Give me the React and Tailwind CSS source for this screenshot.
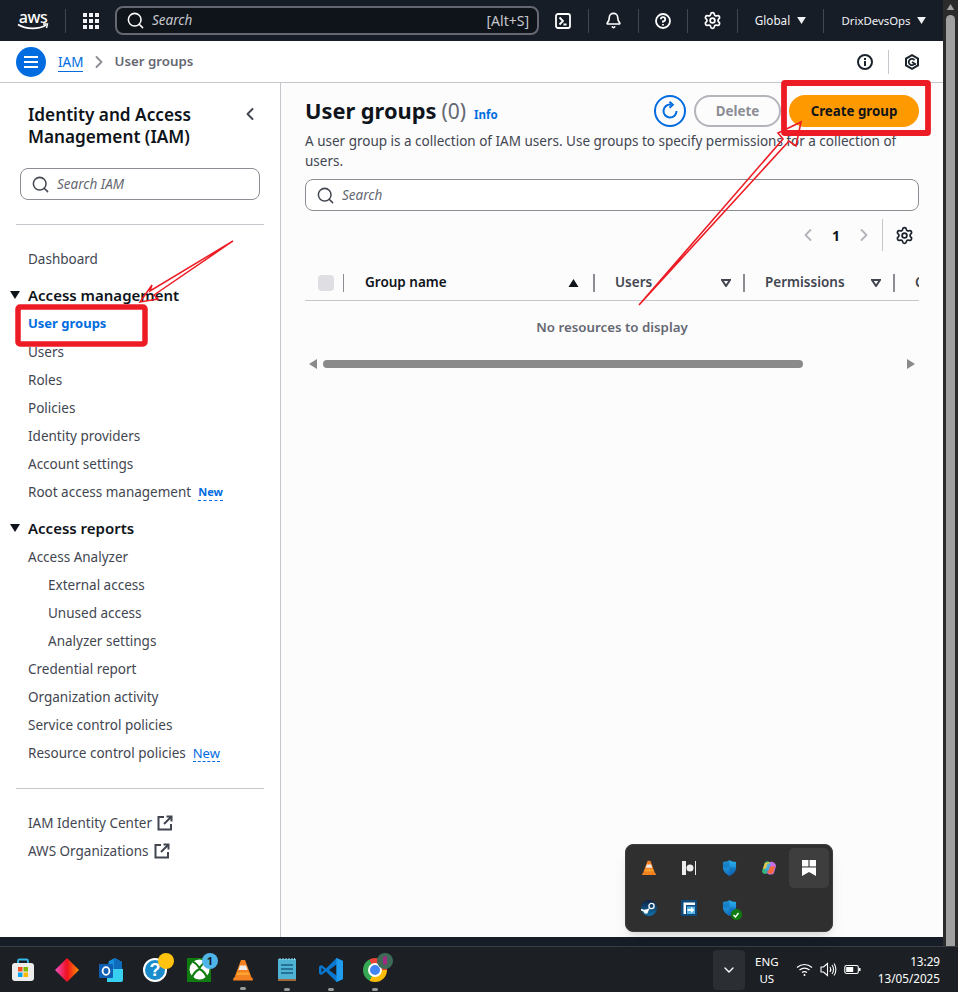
import React from "react";
import { Search, ChevronLeft, ChevronRight, ChevronDown, Bell, Settings } from "lucide-react";

const font = { fontFamily: '"Noto Sans", "Open Sans", sans-serif' };

function Caret({ className = "" }) {
  return (
    <svg viewBox="0 0 10 8" className={className} fill="currentColor"><path d="M0 0h10L5 8z" /></svg>
  );
}

function Gear({ className = "" }) {
  return <Settings className={className} strokeWidth={2.2} />;
}

function ExtLink() {
  return (
    <svg viewBox="0 0 16 16" className="w-[16px] h-[16px] ml-[5px] shrink-0" fill="none" stroke="#424650" strokeWidth="2">
      <path d="M7 2H1.500v12.500H14V9" />
      <path d="M9.500 1.500h5v5M14.500 1.500 7 9" />
    </svg>
  );
}

function HeaderDivider() {
  return <div className="w-px h-[24px] bg-[#424650]" />;
}

function TopBar() {
  return (
    <div className="h-[41px] bg-[#161d26] flex items-center text-white shrink-0">
      <div className="w-[65px] pl-[17px] flex flex-col items-start">
        <div className="w-[32px] flex flex-col items-center">
          <span className="text-[16px] leading-[12px] tracking-[-0.4px] font-medium">aws</span>
          <svg viewBox="0 0 32 7" className="w-[32px] h-[7px]" fill="none"><path d="M1 1.500C9 6.500 22 6.500 29 2" stroke="#fff" strokeWidth="1.700" /><path d="M26 1h4.500l-1 4" stroke="#fff" strokeWidth="1.400" /></svg>
        </div>
      </div>
      <div className="w-px h-[24px] bg-[#424650]" />
      <div className="w-[49px] flex justify-center pl-px">
        <div className="grid grid-cols-3 gap-[2px]">
          {Array.from({ length: 9 }).map((_, i) => (
            <div key={i} className="w-[4px] h-[4px] bg-[#f3f3f7]" />
          ))}
        </div>
      </div>
      <div className="w-[424px] h-[29px] bg-[#0f141a] border-2 border-[#656871] rounded-[8px] flex items-center pl-[9px] pr-[8px] text-[#c6c6cd]">
        <Search className="w-[19px] h-[19px] text-white mr-[7px]" strokeWidth={1.900} />
        <span className="italic text-[13.500px] flex-1">Search</span>
        <span className="text-[14px]">[Alt+S]</span>
      </div>
      <div className="w-[48px] flex justify-center">
        <svg viewBox="0 0 16 16" className="w-[16px] h-[16px]" fill="none" stroke="#fff" strokeWidth="1.800"><rect x="1" y="1" width="14" height="14" rx="2" /><path d="M4.500 4.500 8 8l-3.500 3.500M8.500 11.500h3" /></svg>
      </div>
      <div className="w-[1px] ml-px h-[24px] bg-[#424650]" />
      <div className="w-[49px] flex justify-center pr-px"><Bell className="w-[17px] h-[17px]" strokeWidth={2.300} /></div>
      <HeaderDivider />
      <div className="w-[48px] flex justify-center">
        <svg viewBox="0 0 16 16" className="w-[16px] h-[16px]" fill="none" stroke="#fff" strokeWidth="1.800"><circle cx="8" cy="8" r="7" /><path d="M5.800 6.200A2.200 2.200 0 1 1 8 8.500v1.200M8 11v1.600" /></svg>
      </div>
      <HeaderDivider />
      <div className="w-[49px] flex justify-center"><Gear className="w-[19px] h-[19px]" /></div>
      <HeaderDivider />
      <div className="w-[85px] flex justify-center items-center gap-[7px] text-[11.700px] text-[#f3f3f7]">
        <span>Global</span><Caret className="w-[9px] h-[7px]" />
      </div>
      <HeaderDivider />
      <div className="flex-1 flex justify-center items-center gap-[6px] text-[11.400px] text-[#f3f3f7]">
        <span>DrixDevsOps</span><Caret className="w-[9px] h-[7px]" />
      </div>
    </div>
  );
}

function BreadcrumbBar() {
  return (
    <div className="h-[42px] bg-white border-b border-[#c6c6cd] flex items-center shrink-0">
      <div className="ml-[16px] w-[30px] h-[30px] rounded-full bg-[#006ce0] flex flex-col items-center justify-center gap-[3px]">
        <div className="w-[14px] h-[2px] bg-white" />
        <div className="w-[14px] h-[2px] bg-white" />
        <div className="w-[14px] h-[2px] bg-white" />
      </div>
      <span className="ml-[12px] text-[13.500px] text-[#5f6b7a] leading-[20px] pt-px"><span className="text-[#006ce0] border-b border-[#006ce0]">IAM</span></span>
      <ChevronRight className="w-[20px] h-[20px] text-[#8c8c94] ml-[6px]" strokeWidth={2.200} />
      <span className="ml-[5px] text-[13.300px] font-semibold text-[#656871] pt-px">User groups</span>
      <div className="flex-1" />
      <svg viewBox="0 0 16 16" className="w-[16px] h-[16px]" fill="none" stroke="#1b232d" strokeWidth="2"><circle cx="8" cy="8" r="7" /><path d="M8 7v5M8 4v2" /></svg>
      <div className="w-px h-[24px] bg-[#c6c6cd] ml-[15px]" />
      <div className="w-[54px] flex justify-center pr-[8px]">
        <svg viewBox="0 0 16 16" className="w-[16px] h-[16px]" fill="none" stroke="#1b232d" strokeWidth="2"><path d="M8 1.200 14 4.600v6.800L8 14.800 2 11.400V4.600z" /><path d="M10.600 6.200A3.200 3.200 0 1 0 11 9M8 8l4 2.500" strokeWidth="1.700" /></svg>
      </div>
    </div>
  );
}

function NavItem({ children, indent = false, active = false, badge = null }) {
  return (
    <div className={`h-[28px] flex items-center ${indent ? "pl-[48px]" : "pl-[28px]"} ${active ? "text-[13px] text-[#006ce0] font-bold" : "text-[13.500px] text-[#424650]"}`}>
      <span>{children}</span>
      {badge}
    </div>
  );
}

function NewBadge({ small }) {
  return (
    <span className={`text-[#006ce0] border-b border-dashed border-[#006ce0] leading-[16px] ml-[7px] ${small ? "text-[11px] font-bold" : "text-[13px]"}`}>New</span>
  );
}

function SectionHead({ children }) {
  return (
    <div className="h-[29px] pb-px flex items-center pl-[10px] text-[15px] font-semibold text-[#0f141a]">
      <Caret className="w-[10px] h-[8px] mr-[8px]" />
      <span>{children}</span>
    </div>
  );
}

function Sidebar() {
  return (
    <div className="w-[281px] shrink-0 bg-white border-r border-[#c6c6cd] flex flex-col">
      <div className="flex items-start pl-[28px] pt-[21px] pr-[20px]">
        <div className="flex-1 text-[17.200px] leading-[22px] font-semibold text-[#0f141a]">Identity and Access<br />Management (IAM)</div>
        <ChevronLeft className="w-[20px] h-[20px] text-[#424650]" strokeWidth={2.300} />
      </div>
      <div className="mx-[20px] mt-[20px] h-[32px] border border-[#8c8c94] rounded-[8px] flex items-center pl-[10px]">
        <Search className="w-[19px] h-[19px] text-[#424650] mr-[7px]" strokeWidth={1.900} />
        <span className="italic text-[13.500px] text-[#656871]">Search IAM</span>
      </div>
      <div className="mx-[16px] mt-[24px] border-t border-[#c6c6cd]" />
      <div className="mt-[20px]"><NavItem>Dashboard</NavItem></div>
      <div className="mt-[8px]"><SectionHead>Access management</SectionHead></div>
      <NavItem active>User groups</NavItem>
      <NavItem>Users</NavItem>
      <NavItem>Roles</NavItem>
      <NavItem>Policies</NavItem>
      <NavItem>Identity providers</NavItem>
      <NavItem>Account settings</NavItem>
      <NavItem badge={<NewBadge small />}>Root access management</NavItem>
      <div className="mt-[8px]"><SectionHead>Access reports</SectionHead></div>
      <NavItem>Access Analyzer</NavItem>
      <NavItem indent>External access</NavItem>
      <NavItem indent>Unused access</NavItem>
      <NavItem indent>Analyzer settings</NavItem>
      <NavItem>Credential report</NavItem>
      <NavItem>Organization activity</NavItem>
      <NavItem>Service control policies</NavItem>
      <NavItem badge={<NewBadge />}>Resource control policies</NavItem>
      <div className="mx-[16px] mt-[21px] border-t border-[#c6c6cd]" />
      <div className="mt-[20px]">
        <NavItem badge={<ExtLink />}>IAM Identity Center</NavItem>
        <NavItem badge={<ExtLink />}>AWS Organizations</NavItem>
      </div>
    </div>
  );
}

function ColHead({ label, sort }) {
  return (
    <div className="ml-[20px] w-[130px] h-[18px] flex items-center justify-between border-r-2 border-[#8c8c94] pr-[12px] shrink-0">
      <span className="text-[13.500px] font-semibold text-[#424650]">{label}</span>
      {sort}
    </div>
  );
}

function SortDown() {
  return <svg viewBox="0 0 10 8" className="w-[10px] h-[8px]" fill="none" stroke="#424650" strokeWidth="2"><path d="M1 1h8L5 7z" /></svg>;
}

function MainPanel() {
  return (
    <div className="flex-1 min-w-0 bg-[#fcfcfd] px-[24px] pt-[12px] flex flex-col overflow-hidden">
      <div className="flex items-start">
        <div className="flex items-baseline flex-1 pt-[1px]">
          <span className="text-[21.800px] leading-[30px] font-bold text-[#0f141a]">User groups</span>
          <span className="text-[21px] leading-[30px] text-[#656871] ml-[5px]">(0)</span>
          <span className="text-[11.500px] font-bold text-[#006ce0] ml-[8px]">Info</span>
        </div>
        <div className="w-[32px] h-[32px] rounded-full border-2 border-[#006ce0] flex items-center justify-center">
          <svg viewBox="0 0 20 20" className="w-[20px] h-[20px]" fill="none" stroke="#006ce0" strokeWidth="2"><path d="M16.500 10A6.500 6.500 0 1 1 11 3.600" /><path d="M9.500 0.800 12.800 3.800 9.500 6.800" /></svg>
        </div>
        <div className="ml-[8px] w-[87px] h-[32px] rounded-full border-2 border-[#b4b4bb] flex items-center justify-center text-[13.400px] font-bold text-[#8c8c94]">Delete</div>
        <div className="ml-[8px] w-[130px] h-[32px] pt-px rounded-full bg-[#ff9900] flex items-center justify-center text-[13.300px] font-bold text-[#0f141a]">Create group</div>
      </div>
      <p className="text-[13.500px] leading-[20px] text-[#424650] mt-[4px] pr-[14px]">A user group is a collection of IAM users. Use groups to specify permissions for a collection of users.</p>
      <div className="mt-[8px] h-[32px] shrink-0 bg-white border border-[#8c8c94] rounded-[8px] flex items-center pl-[10px]">
        <Search className="w-[19px] h-[19px] text-[#424650] mr-[7px]" strokeWidth={1.900} />
        <span className="italic text-[13.500px] text-[#656871]">Search</span>
      </div>
      <div className="h-[32px] mt-[8px] shrink-0 flex items-center justify-end">
        <ChevronLeft className="w-[20px] h-[20px] text-[#b4b4bb]" strokeWidth={2.200} />
        <span className="ml-[14px] text-[14px] font-bold text-[#0f141a] w-[10px]">1</span>
        <ChevronRight className="ml-[12px] w-[20px] h-[20px] text-[#b4b4bb]" strokeWidth={2.200} />
        <div className="ml-[8px] w-px h-[32px] bg-[#c6c6cd]" />
        <div className="w-[36px] flex justify-center pl-[7px]"><Gear className="w-[19px] h-[19px] text-[#1b232d]" /></div>
      </div>
      <div className="h-[44px] shrink-0 mt-[6px] pt-[8px] border-b border-[#c6c6cd] flex items-center overflow-hidden pl-[13px]">
        <div className="w-[16px] h-[16px] rounded-[4px] bg-[#dedee3] shrink-0" />
        <div className="w-px h-[18px] bg-[#8c8c94] ml-[9px] shrink-0" />
        <div className="ml-[21px] w-[230px] shrink-0 h-[18px] flex items-center justify-between border-r-2 border-[#8c8c94] pr-[14px]">
          <span className="text-[13.500px] font-semibold text-[#0f141a]">Group name</span>
          <Caret className="w-[11px] h-[8px] rotate-180 text-[#0f141a]" />
        </div>
        <ColHead label="Users" sort={<SortDown />} />
        <ColHead label="Permissions" sort={<SortDown />} />
        <span className="ml-[20px] text-[13.500px] font-semibold text-[#424650] shrink-0 whitespace-nowrap">C</span>
      </div>
      <div className="h-[53px] shrink-0 flex items-center justify-center text-[13.300px] font-semibold text-[#656871] pt-px">No resources to display</div>
      <div className="h-[12px] shrink-0 flex items-center mt-[4px] pl-[3px] pr-[3px]">
        <Caret className="w-[10px] h-[8px] rotate-90 text-[#8a8a8a] shrink-0" />
        <div className="h-[8px] w-[480px] rounded-full bg-[#8a8a8a] ml-[5px]" />
        <div className="flex-1" />
        <Caret className="w-[10px] h-[8px] -rotate-90 text-[#8a8a8a] shrink-0" />
      </div>
    </div>
  );
}

function Annotations() {
  return (
    <svg className="absolute left-0 top-0 pointer-events-none" width="958" height="992" viewBox="0 0 958 992" fill="none">
      <rect x="18" y="307" width="127" height="37" rx="2" stroke="#ed1c24" strokeWidth="5.500" />
      <rect x="784" y="83" width="144" height="50" rx="1" stroke="#ed1c24" strokeWidth="5.800" />
      <path d="M233 241 L150 291 L152 285 L140 302 L158 299 L154 295 Z" stroke="#ed1c24" strokeWidth="1.500" />
      <path d="M639 305 L783 139 L778 133 L801 122 L796 146 L789 141 Z" stroke="#ed1c24" strokeWidth="1.600" />
    </svg>
  );
}

function TrayIcon({ children, active }) {
  return <div className={`w-[40px] h-[40px] rounded-[5px] flex items-center justify-center ${active ? "bg-[#3e3e3e]" : ""}`}>{children}</div>;
}

function Cone({ size = 16 }) {
  return (
    <svg viewBox="0 0 20 22" width={size} height={size * 1.1}>
      <path d="M8 1h4l6 16H2z" fill="#f58220" />
      <path d="M7 6.500h6l1.600 4.500H5.400z" fill="#ececec" />
      <path d="M4.500 13.500h11l1 2.500H3.500z" fill="#ffa733" />
      <path d="M2.500 17c-1 1-2 2-2.500 3.500 0 1 .5 1 1 1h18c.5 0 1 0 1-1C19.500 19 18.500 18 17.500 17z" fill="#f58220" />
    </svg>
  );
}

function Shield({ check }) {
  return (
    <div className="relative w-[15px] h-[16px]">
      <svg viewBox="0 0 16 17" width="15" height="16"><defs><linearGradient id={check ? "sh2" : "sh1"} x1="0" x2="0" y1="0" y2="1"><stop offset="0" stopColor="#2bb3f0" /><stop offset="1" stopColor="#0f6cbd" /></linearGradient></defs><path d="M8 0c2 1.500 4 2 7 2.200V8c0 4-3 7-7 9-4-2-7-5-7-9V2.200C4 2 6 1.500 8 0z" fill={check ? "url(#sh2)" : "url(#sh1)"} /><path d="M8 8h7c0 4-3 7-7 9z M8 8H1V2.200C4 2 6 1.500 8 0z" fill="#0a4f9c" opacity=".35" /></svg>
      {check && <div className="absolute -right-[5px] -bottom-[4px] w-[11px] h-[11px] rounded-full bg-[#107c10] flex items-center justify-center"><svg viewBox="0 0 8 8" width="8" height="8" fill="none" stroke="#fff" strokeWidth="1.400"><path d="M1.500 4 3.500 6 6.500 2" /></svg></div>}
    </div>
  );
}

function TrayPopup() {
  return (
    <div className="absolute left-[625px] top-[844px] w-[208px] h-[88px] rounded-[8px] bg-[#2f2f2f] border border-[#3d3d3d] shadow-lg p-[3px] grid grid-cols-5 grid-rows-2">
      <TrayIcon><Cone size={14} /></TrayIcon>
      <TrayIcon><svg viewBox="0 0 16 16" width="16" height="16"><rect x="1" y="1" width="4" height="14" fill="#eee" /><circle cx="9" cy="8" r="3.500" fill="#eee" /><rect x="14" y="1" width="1" height="14" fill="#eee" /></svg></TrayIcon>
      <TrayIcon><Shield /></TrayIcon>
      <TrayIcon><svg viewBox="0 0 16 16" width="16" height="16"><path d="M4 2c2-1 4-1 5 1L6 13c-1 2-5 1-5-2z" fill="#36b37e" /><path d="M9 2c3-1 6 2 6 4l-2 7c-1 2-6 2-7 0z" fill="#c86fe8" /><path d="M8 7l6-1-2 7c-1 1-4 1-5 0z" fill="#f7683b" /><path d="M4 3l5-1-2 6-5 1z" fill="#f5c542" /><path d="M6 4l4-1-2 7-4 1z" fill="#3bb0f0" opacity=".8" /></svg></TrayIcon>
      <TrayIcon active><svg viewBox="0 0 14 16" width="14" height="16" fill="#fff"><rect x="0" y="0" width="6.400" height="6.400" /><rect x="7.600" y="0" width="6.400" height="6.400" /><path d="M0 7.600h14V16l-7-4-7 4z" /></svg></TrayIcon>
      <TrayIcon><svg viewBox="0 0 16 16" width="16" height="16"><defs><linearGradient id="st" x1="0" x2="0" y1="0" y2="1"><stop offset="0" stopColor="#0e2244" /><stop offset="1" stopColor="#1172a8" /></linearGradient></defs><circle cx="8" cy="8" r="8" fill="url(#st)" /><path d="M0 9.500l5 2 3-2.500" stroke="#fff" strokeWidth="1.800" fill="none" /><circle cx="10.500" cy="6" r="2.600" fill="none" stroke="#fff" strokeWidth="1.300" /><circle cx="5" cy="11.500" r="2.200" fill="#fff" /></svg></TrayIcon>
      <TrayIcon><svg viewBox="0 0 16 16" width="16" height="16"><rect width="16" height="16" rx="1" fill="#0d4a7c" /><path d="M2.500 14V2.500H14v2.500H5v9z" fill="#fff" /><rect x="6" y="6.500" width="8" height="7.500" fill="#5ab5e8" /><path d="M6.500 9h3.500V7l3.500 3-3.500 3v-2H6.500z" fill="#fff" /></svg></TrayIcon>
      <TrayIcon><Shield check /></TrayIcon>
    </div>
  );
}

function Taskbar() {
  const dot = <div className="absolute bottom-[-9px] left-1/2 -translate-x-1/2 w-[6px] h-[3px] rounded-full bg-[#9a9a9a]" />;
  return (
    <div className="h-[46px] bg-[#1c1f24] border-t border-[#3a3d42] flex items-center shrink-0 text-white relative">
      <div className="w-[44px] flex justify-center ml-[1px]">
        <svg viewBox="0 0 24 24" width="24" height="24"><path d="M7 6V3a1.500 1.500 0 0 1 1.500-1.500h7A1.500 1.500 0 0 1 17 3v3" fill="none" stroke="#35b8e8" strokeWidth="1.800" /><rect x="1" y="5" width="22" height="18" rx="3" fill="#ececec" /><rect x="7" y="9" width="4.500" height="4.500" fill="#f25022" /><rect x="12.500" y="9" width="4.500" height="4.500" fill="#7fba00" /><rect x="7" y="14.500" width="4.500" height="4.500" fill="#00a4ef" /><rect x="12.500" y="14.500" width="4.500" height="4.500" fill="#ffb900" /></svg>
      </div>
      <div className="w-[44px] flex justify-center">
        <svg viewBox="0 0 24 24" width="24" height="24"><defs><linearGradient id="dm" x1="0" x2="1"><stop offset="0" stopColor="#f050c8" /><stop offset=".5" stopColor="#f01020" /><stop offset="1" stopColor="#ff9000" /></linearGradient></defs><path d="M12 0l12 12-12 12L0 12z" fill="url(#dm)" /></svg>
      </div>
      <div className="w-[44px] flex justify-center">
        <svg viewBox="0 0 24 24" width="24" height="24"><path d="M10 3l6-3 7 4-1 7H8z" fill="#1490df" /><path d="M15 0l8 4v7h-8z" fill="#0f6cbd" /><path d="M8 11h16v11a2 2 0 0 1-2 2H8z" fill="#38d0f0" /><rect x="0" y="6" width="14" height="14" rx="1" fill="#0f5fb5" /><ellipse cx="7" cy="13" rx="3.400" ry="3.900" fill="none" stroke="#fff" strokeWidth="1.800" /></svg>
      </div>
      <div className="w-[44px] flex justify-center relative">
        <div className="w-[24px] h-[24px] rounded-full bg-[#1a8ccc] border-2 border-white flex items-center justify-center text-white text-[18px] font-bold leading-none" style={{ fontFamily: '"Liberation Sans", sans-serif' }}>?</div>
        <div className="absolute left-[25px] -top-[5px] w-[16px] h-[16px] rounded-full bg-[#ffc20e]" />
      </div>
      <div className="w-[44px] flex justify-center relative">
        <div className="w-[24px] h-[24px] bg-[#107c10] flex items-center justify-center">
          <svg viewBox="0 0 20 20" width="21" height="21"><circle cx="10" cy="10" r="9.500" fill="#fff" /><path d="M3 2c4 2 6 5 7 6.500C11 7 13 4 17 2M3 18c1-4 4-7 7-8.500 3 1.500 6 4.500 7 8.500" stroke="#107c10" strokeWidth="2" fill="none" /></svg>
        </div>
        <div className="absolute left-[25px] -top-[5px] w-[16px] h-[16px] rounded-full bg-[#4fb4e8] text-[#12202c] text-[11px] font-bold flex items-center justify-center leading-none">1</div>
      </div>
      <div className="w-[44px] flex justify-center relative"><Cone size={20} />{dot}</div>
      <div className="w-[44px] flex justify-center relative">
        <svg viewBox="0 0 18 24" width="18" height="24"><rect y="1" width="18" height="20" fill="#4fb3d6" /><rect y="21" width="18" height="2" fill="#a06a3a" /><path d="M3 7h12M3 11h12M3 15h12" stroke="#1b5f80" strokeWidth="1.500" /><path d="M2 0v2M5 0v2M8 0v2M11 0v2M14 0v2M16.500 0v2" stroke="#9fdcf0" /></svg>{dot}
      </div>
      <div className="w-[44px] flex justify-center relative">
        <svg viewBox="0 0 24 24" width="24" height="24"><path d="M17.500 0 24 3v18l-6.500 3L7 13.500 2.500 17 0 15.500v-7L2.500 7 7 10.500z" fill="#0a78d0" /><path d="M17.500 6.500 10 12l7.500 5.500zM2.500 9.500v5L5 12z" fill="#1c1f24" /><path d="M17.500 0 24 3v18l-6.500 3z" fill="#1f9cf0" /></svg>{dot}
      </div>
      <div className="w-[44px] flex justify-center relative">
        <div className="w-[24px] h-[24px] rounded-full relative overflow-hidden bg-[conic-gradient(from_-30deg,#ea4335_0_33%,#fbbc05_33%_66%,#34a853_66%_100%)]">
          <div className="absolute left-[5px] top-[5px] rounded-full bg-[#4285f4] border-2 border-white w-[14px] h-[14px]" />
        </div>
        <div className="absolute left-[24px] -top-[5px] w-[16px] h-[16px] rounded-full bg-[#3e6b58] flex items-center justify-center"><div className="w-[4px] h-[9px] bg-[#a02a80] rounded-sm" /></div>
        {dot}
      </div>
      <div className="flex-1" />
      <div className="w-[32px] h-[40px] rounded-[4px] bg-[#2b2e33] flex items-center justify-center mr-[4px]">
        <ChevronDown className="w-[16px] h-[16px]" strokeWidth={2} />
      </div>
      <div className="w-[36px] text-center text-[11.500px] leading-[17px] mr-[11px]">ENG<br />US</div>
      <svg viewBox="0 0 17 17" className="w-[17px] h-[17px] mr-[7px]" fill="none" stroke="#fff" strokeWidth="1.200"><path d="M1 6.500C5.500 2.500 11.500 2.500 16 6.500M3.500 9c3.200-2.500 6.800-2.500 10 0M6 11.500c1.700-1.200 3.300-1.200 5 0" /><circle cx="8.500" cy="14" r="1" fill="#fff" stroke="none" /></svg>
      <svg viewBox="0 0 17 17" className="w-[17px] h-[17px] mr-[7px]" fill="none" stroke="#fff" strokeWidth="1.100"><path d="M1 6h2.500L7.500 2.500v12L3.500 11H1z" /><path d="M10 6c1 1.500 1 3.500 0 5M12 4c2 2.500 2 6.500 0 9M14 2.500c2.500 3.500 2.500 8.500 0 12" /></svg>
      <svg viewBox="0 0 17 17" className="w-[17px] h-[17px] mr-[17px]" fill="none" stroke="#fff" strokeWidth="1.100"><rect x="0.800" y="4.500" width="13.500" height="8" rx="1.800" /><rect x="2.200" y="6" width="7" height="5" fill="#fff" stroke="none" /><path d="M15.800 7v3" strokeWidth="1.500" /></svg>
      <div className="text-[11.700px] leading-[17px] text-right mr-[18px]">13:29<br />13/05/2025</div>
    </div>
  );
}

export default function App() {
  return (
    <div className="relative w-[958px] h-[992px] overflow-hidden flex flex-col bg-white" style={font}>
      <div className="flex-1 min-h-0 flex">
        <div className="w-[943px] flex flex-col">
          <TopBar />
          <BreadcrumbBar />
          <div className="flex-1 min-h-0 flex">
            <Sidebar />
            <MainPanel />
          </div>
          <div className="h-[9px] bg-[#161d26] shrink-0" />
        </div>
        <div className="w-[15px] bg-[#2b2b2b] flex flex-col items-center pt-[4px]">
          <Caret className="w-[9px] h-[6px] rotate-180 text-[#a0a0a0]" />
          <div className="mt-[5px] w-[9px] flex-1 bg-[#a0a0a0] rounded-t-full" />
        </div>
      </div>
      <Taskbar />
      <TrayPopup />
      <Annotations />
    </div>
  );
}
